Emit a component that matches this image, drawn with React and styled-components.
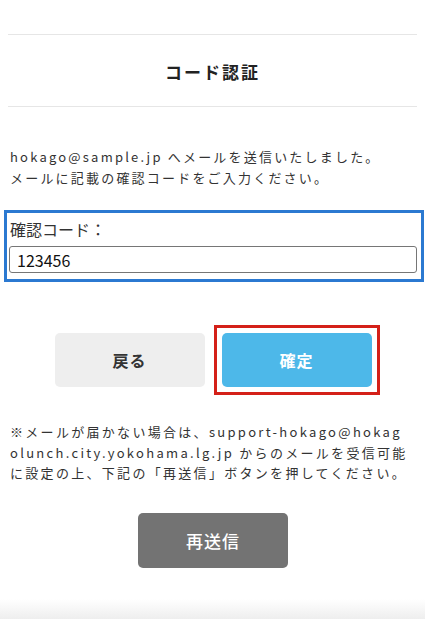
import React from "react";
import styled, { createGlobalStyle } from "styled-components";

const Global = createGlobalStyle`
  html, body { margin: 0; padding: 0; background: #fff; }
  body {
    font-family: "Noto Sans CJK JP", "Noto Sans", sans-serif;
    color: #333;
  }
  * { box-sizing: border-box; }
`;

const Page = styled.div`
  padding: 34px 8px 0;
  min-height: 619px;
  display: flex;
  flex-direction: column;
`;

const Header = styled.header`
  border-top: 1px solid #e6e6e6;
  border-bottom: 1px solid #e6e6e6;
  height: 73px;
  display: flex;
  align-items: center;
  justify-content: center;
`;

const Title = styled.h1`
  margin: 0;
  font-size: 17px;
  font-weight: 700;
  letter-spacing: 2px;
  color: #222;
  line-height: 1;
  padding-top: 2px;
`;

const Message = styled.p`
  margin: 39px 0 0;
  padding-left: 2px;
  font-size: 13px;
  line-height: 21px;
  letter-spacing: 2.2px;
  color: #333;
`;

const FieldBox = styled.div`
  margin: 22px -7px 0 -4px;
  border: 3px solid #2b79d1;
  padding: 4px 4px 6px 2px;
  display: flex;
  flex-direction: column;
`;

const Label = styled.label`
  font-size: 16px;
  line-height: 24px;
  padding-left: 1px;
  color: #333;
`;

const Input = styled.input`
  margin-top: 5px;
  height: 27px;
  width: 100%;
  border: 1px solid #767676;
  border-radius: 3px;
  padding: 0 7px;
  font-family: "Noto Sans CJK JP", "Noto Sans", sans-serif;
  font-size: 16px;
  color: #111;
  background: #fff;
  outline: none;
`;

const ButtonRow = styled.div`
  margin-top: 51px;
  display: flex;
  justify-content: center;
  align-items: center;
  gap: 17px;
  padding-left: 1px;
`;

const Highlight = styled.div`
  border: 3px solid #d42018;
  padding: 5px;
  margin: -8px;
  display: flex;
`;

const Button = styled.button`
  width: 150px;
  height: ${(p) => p.$h || 54}px;
  border: none;
  border-radius: 5px;
  font-family: "Noto Sans CJK JP", "Noto Sans", sans-serif;
  font-size: ${(p) => p.$size || 16}px;
  font-weight: ${(p) => p.$weight || 700};
  letter-spacing: 1px;
  cursor: pointer;
  background: ${(p) =>
    p.$variant === "primary" ? "#4db8e9" : p.$variant === "dark" ? "#737373" : "#eeeeee"};
  color: ${(p) => (p.$variant === "secondary" ? "#333" : "#fff")};
`;

const Note = styled.p`
  margin: 35px 0 0;
  padding-left: 2px;
  font-size: 13px;
  line-height: 20.5px;
  letter-spacing: 2.3px;
  color: #333;
  word-break: break-all;
`;

const ResendRow = styled.div`
  margin-top: 29px;
  display: flex;
  justify-content: center;
  padding-left: 1px;
`;

const Footer = styled.div`
  margin: auto -8px 0;
  height: 20px;
  background: linear-gradient(#ffffff, #eeeeee);
`;

export default function App() {
  return (
    <>
      <Global />
      <Page>
        <Header>
          <Title>コード認証</Title>
        </Header>
        <Message>
          hokago@sample.jp へメールを送信いたしました。
          <br />
          メールに記載の確認コードをご入力ください。
        </Message>
        <FieldBox>
          <Label htmlFor="code">確認コード：</Label>
          <Input id="code" defaultValue="123456" />
        </FieldBox>
        <ButtonRow>
          <Button $variant="secondary">戻る</Button>
          <Highlight>
            <Button $variant="primary">確定</Button>
          </Highlight>
        </ButtonRow>
        <Note>
          ※メールが届かない場合は、support-hokago@hokag
          <br />
          olunch.city.yokohama.lg.jp からのメールを受信可能
          <br />
          に設定の上、下記の「再送信」ボタンを押してください。
        </Note>
        <ResendRow>
          <Button $variant="dark" $h={55} $weight={500} $size={17}>
            再送信
          </Button>
        </ResendRow>
        <Footer />
      </Page>
    </>
  );
}
